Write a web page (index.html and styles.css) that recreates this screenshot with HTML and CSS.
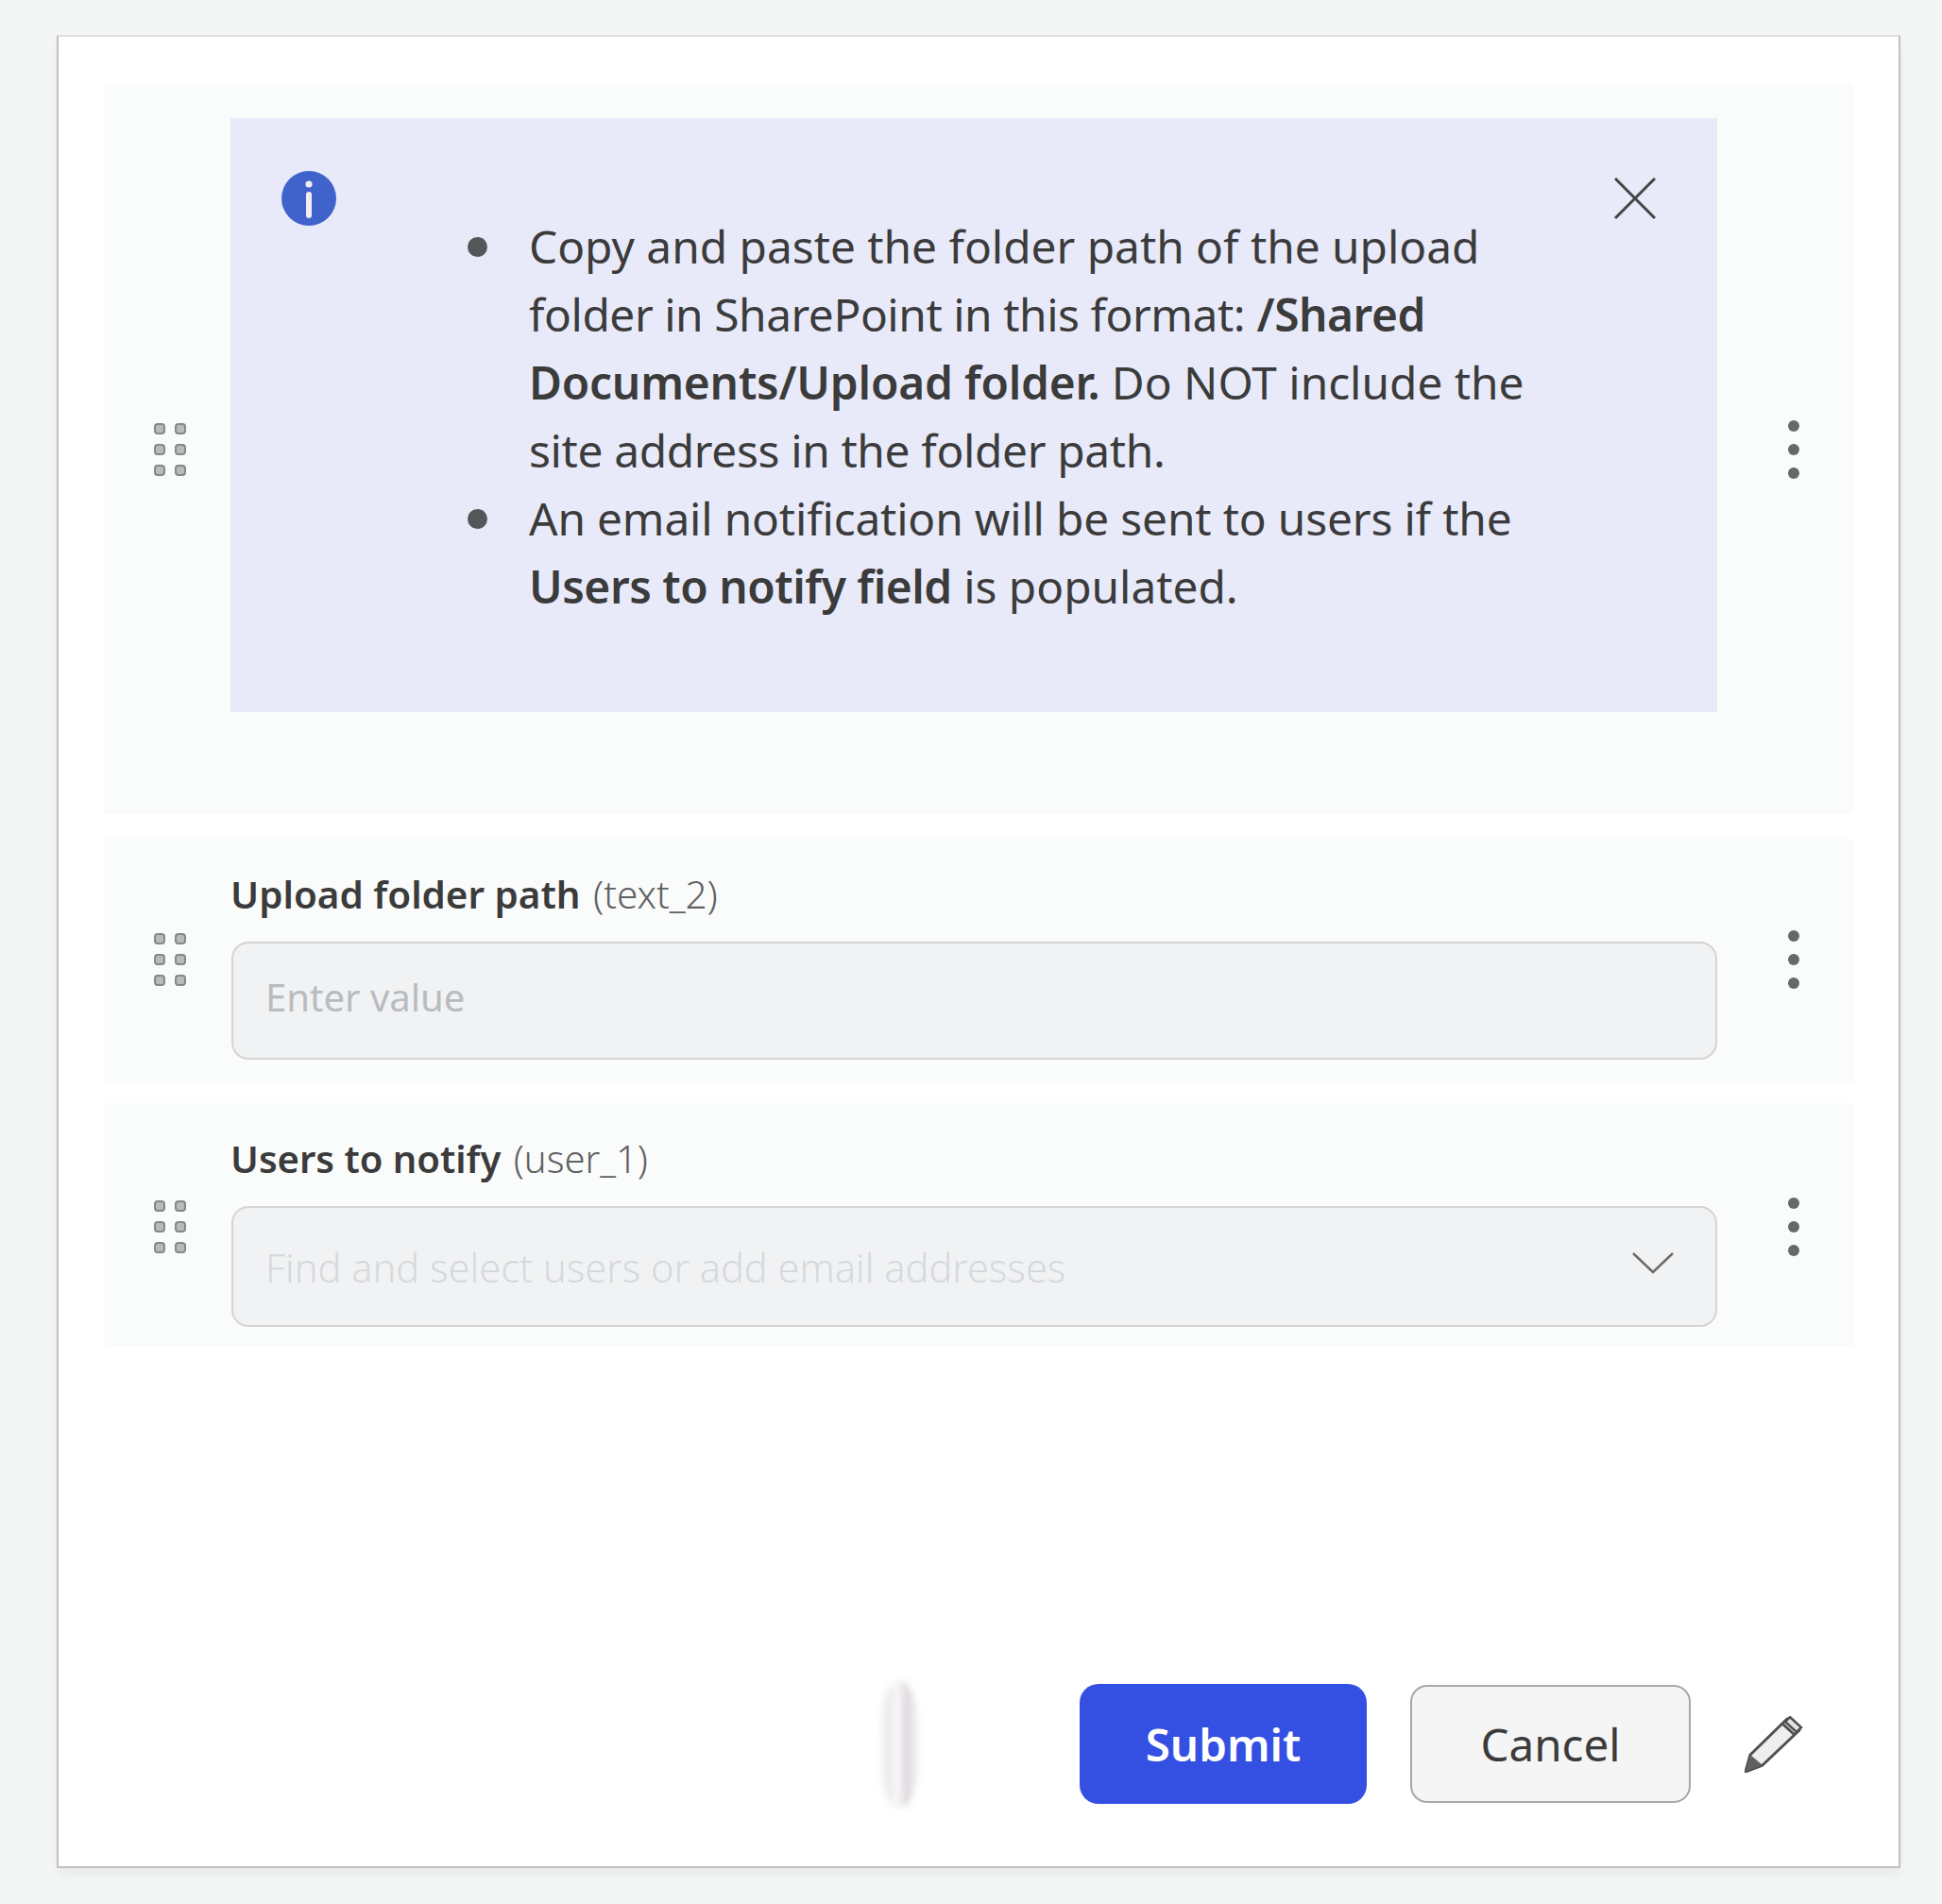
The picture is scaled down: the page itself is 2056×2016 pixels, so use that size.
FILE: index.html
```html
<!DOCTYPE html>
<html lang="en">

<head>
	<meta charset="UTF-8">
	<title>Upload form</title>
	<link rel="stylesheet" href="styles.css">
</head>

<body>
	<div class="card">
		<div class="row row-notice">
			<div class="handle"><i></i><i></i><i></i><i></i><i></i><i></i></div>
			<div class="notice">
				<svg class="info" viewBox="0 0 58 58">
					<ellipse cx="29" cy="29" rx="29" ry="29" fill="#3f62cb"/>
					<circle cx="29" cy="14" r="3.6" fill="#f4eef2"/>
					<path d="M29 25v22" stroke="#f4eef2" stroke-width="6" stroke-linecap="round"/>
				</svg>
				<ul class="tips">
					<li><div>Copy and paste the folder path of the upload<br><span class="tight">folder in SharePoint in this format:</span> <b>/Shared<br><span class="loose">Documents/Upload folder.</span></b> Do NOT include the<br><span class="tight-some">site address in the folder path.</span></div></li>
					<li><div><span class="tight-bit">An email notification will be sent to users if the</span><br><b>Users to notify field</b> is populated.</div></li>
				</ul>
				<svg class="close" viewBox="0 0 44 44">
					<path d="M1 1l42 42M43 1L1 43" stroke="#454545" stroke-width="3" fill="none"/>
				</svg>
			</div>
			<div class="kebab"><i></i><i></i><i></i></div>
		</div>

		<div class="row row-path">
			<div class="handle"><i></i><i></i><i></i><i></i><i></i><i></i></div>
			<div class="field">
				<div class="label"><b>Upload folder path</b> <span>(text_2)</span></div>
				<div class="input input-path">Enter value</div>
			</div>
			<div class="kebab"><i></i><i></i><i></i></div>
		</div>

		<div class="row row-users">
			<div class="handle"><i></i><i></i><i></i><i></i><i></i><i></i></div>
			<div class="field">
				<div class="label"><b>Users to notify</b> <span>(user_1)</span></div>
				<div class="input input-users">
					<span>Find and select users or add email addresses</span>
					<svg class="chevron" viewBox="0 0 44 24">
						<path d="M1 2l21 20L43 2" stroke="#6b6b6b" stroke-width="2.5" fill="none"/>
					</svg>
				</div>
			</div>
			<div class="kebab"><i></i><i></i><i></i></div>
		</div>

		<div class="footer">
			<div class="smudge"></div>
			<div class="btn btn-submit">Submit</div>
			<div class="btn btn-cancel">Cancel</div>
			<svg class="pencil" viewBox="0 0 62 60">
				<path d="M1 59L6 41 45 3l13 12-39 37z" fill="#eeeeee" stroke="#505050" stroke-width="3" stroke-linejoin="round"/>
				<path d="M1 59L6 41l13 11z" fill="#606060"/>
				<path d="M40 8l13 12" stroke="#505050" stroke-width="3" fill="none"/>
				<path d="M48 1l12 11-5 5-12-11z" fill="#e4e4e4" stroke="#505050" stroke-width="2.5"/>
			</svg>
		</div>
	</div>
</body>

</html>
```

FILE: styles.css
```css
* {
	box-sizing: border-box;
}

body {
	margin: 0;
	padding: 37px 44px 30px 60px;
	background: #f4f6f5;
	font-family: "Noto Sans", "Liberation Sans", sans-serif;
	color: #3b3b3b;
}

b {
	font-weight: 600;
}

.card {
	width: 1952px;
	height: 1941px;
	padding: 50px 48px 0 49px;
	background: #fff;
	border: 2px solid #c0c0c3;
	border-top-color: #dedfdd;
	box-shadow: 0 6px 10px rgba(0, 0, 0, 0.05);
}

.row {
	display: grid;
	grid-template-columns: 133px 1574px 1fr;
	align-items: center;
	background: #fafbfb;
}

.row-notice {
	height: 773px;
}

.row-path {
	height: 259px;
	margin-top: 26px;
}

.row-users {
	height: 257px;
	margin-top: 21px;
}

/* drag handle */
.handle {
	display: grid;
	grid-template-columns: 12px 12px;
	grid-auto-rows: 12px;
	column-gap: 10px;
	row-gap: 10px;
	margin-left: 52px;
}

.handle i {
	background: #b9baba;
	border: 2px solid #85888a;
	border-radius: 4px;
}

.row-path .handle,
.row-path .kebab {
	margin-bottom: 4px;
}

.row-users .handle,
.row-users .kebab {
	margin-top: 4px;
}

.kebab {
	display: flex;
	flex-direction: column;
	gap: 13px;
	margin-left: 75px;
}

.kebab i {
	width: 12px;
	height: 12px;
	background: #66696a;
	border-radius: 50%;
}

/* blue info box */
.notice {
	display: flex;
	align-self: start;
	align-items: flex-start;
	height: 629px;
	margin-top: 36px;
	padding: 56px 65px 0 53px;
	background: #e8eafa;
}

.info {
	flex: none;
	width: 58px;
	height: 58px;
	margin-left: 1px;
}

.tips {
	flex: 1;
	margin: 0;
	padding: 44px 0 0 139px;
	font-size: 47.8px;
	line-height: 72px;
	list-style: none;
	white-space: nowrap;
}

.tips li {
	display: flex;
}

.tips li::before {
	content: "";
	flex: none;
	width: 21px;
	height: 21px;
	margin: 26px 44px 0 0;
	background: #555658;
	border-radius: 50%;
}

.tips b {
	letter-spacing: -0.45px;
}

.tips .tight {
	font-weight: 400;
	letter-spacing: -0.43px;
}

.tips .loose {
	letter-spacing: -0.2px;
}

.tips .tight-some {
	letter-spacing: -0.33px;
}

.tips .tight-bit {
	letter-spacing: -0.15px;
}

.close {
	flex: none;
	width: 44px;
	height: 44px;
	margin-top: 7px;
}

.field {
	align-self: start;
	padding-top: 22px;
}

.label {
	height: 87px;
	font-size: 40.4px;
	line-height: 74px;
}

.row-users .label {
	font-size: 40px;
}

.label span {
	margin-left: 3px;
	font-weight: 300;
	color: #5f6163;
}

.input {
	display: flex;
	align-items: center;
	justify-content: space-between;
	margin-left: 1px;
	padding-left: 34px;
	padding-right: 44px;
	background: #f1f2f3;
	border: 2px solid #d6d4d3;
	border-radius: 18px;
	font-size: 40px;
}

.input-path {
	height: 125px;
	padding-bottom: 8px;
	color: #b8bcc0;
}

.input-users {
	height: 128px;
	padding-top: 2px;
	color: #d6d9dc;
	font-size: 41.6px;
	font-weight: 300;
}

.chevron {
	width: 44px;
	height: 24px;
	margin-bottom: 10px;
}

/* bottom buttons */
.footer {
	display: flex;
	align-items: center;
	height: 127px;
	margin-top: 358px;
}

.smudge {
	width: 46px;
	height: 136px;
	margin-left: 818px;
	margin-right: 168px;
	background: linear-gradient(90deg, #fff, #ece8ec 25%, #fbfafb 45%, #dcd6db 68%, #fff);
	border-radius: 50%;
	filter: blur(3px);
}

.btn {
	display: flex;
	align-items: center;
	justify-content: center;
	font-size: 47.5px;
}

.btn-submit {
	width: 304px;
	height: 127px;
	background: #3450e2;
	border-radius: 20px;
	color: #fff;
	font-weight: 600;
}

.btn-cancel {
	width: 297px;
	height: 125px;
	margin-left: 46px;
	background: #f5f5f5;
	border: 2px solid #a9a7a5;
	border-radius: 18px;
}

.pencil {
	width: 62px;
	height: 60px;
	margin-left: 57px;
}
```
